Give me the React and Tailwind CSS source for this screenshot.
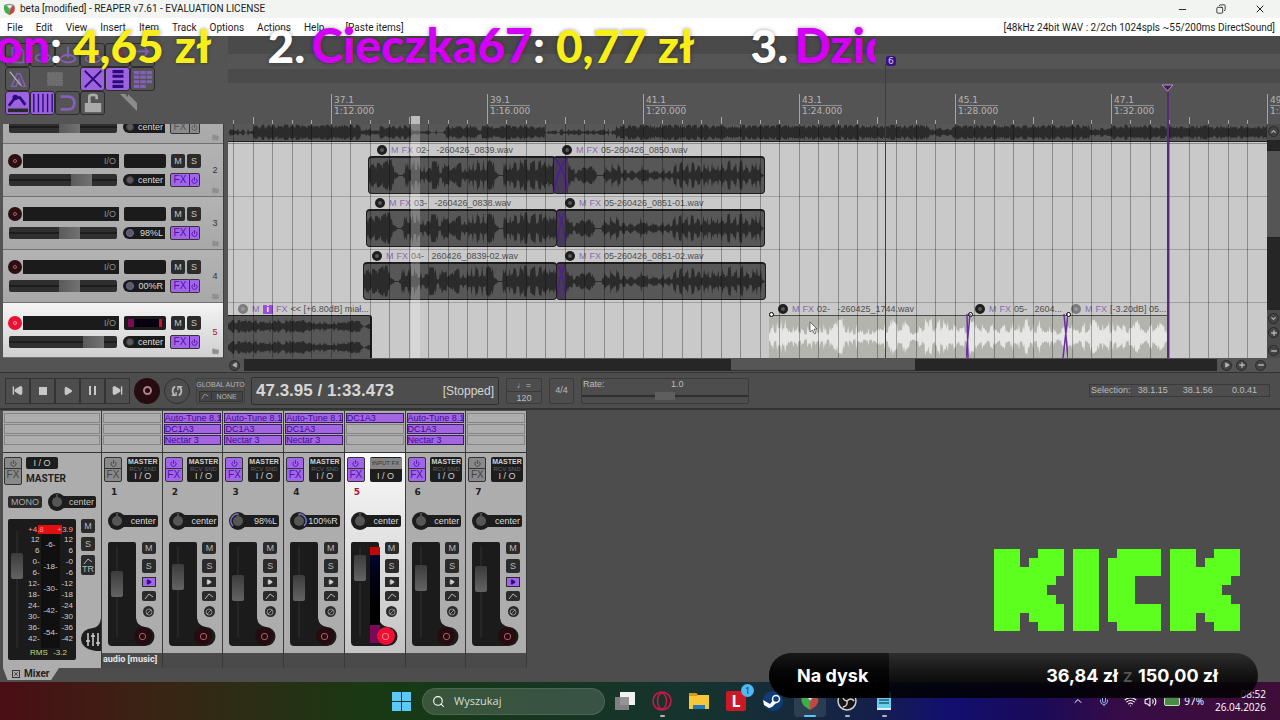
import { Play, Pause, SkipBack, SkipForward, Search, Wifi, Volume2, Mic, ChevronUp, Minus, Plus, X, Copy, Power, Folder } from 'lucide-react';

const STEP = 19.5;
const GRID_START = 5;
const gridLines = Array.from({ length: 110 }, (_, i) => Math.round(GRID_START + STEP * i));

const measures = [
  { bar: '37.1', time: '1:12.000', x: 103 },
  { bar: '39.1', time: '1:16.000', x: 259 },
  { bar: '41.1', time: '1:20.000', x: 415 },
  { bar: '43.1', time: '1:24.000', x: 571 },
  { bar: '45.1', time: '1:28.000', x: 727 },
  { bar: '47.1', time: '1:32.000', x: 883 },
  { bar: '49.1', time: '1:36.000', x: 1039 },
];

// amplitude strings, one digit per 2px
const VOX_A = '567577678999' + '521001' + '7737938' + '5252448887' + '1575634567724' + '2638397393898' + '82100' + '7737487397' + '9937893896857576';
const VOX_B = '86341' + '3345445542' + '000' + '2532743751' + '331232123' + '6334123221' + '241231' + '572783572873652' + '74627536' + '3743893572' + '8936427583710';
const VOX_SEL_A = '246274848432535243153624252641546788962524162331241323443625897633786521225439789347948673465344522';
const VOX_SEL_B = '8978643643256432456325734625895362584323524312456';
const VOX_SEL_C = '254643325723788763645727365465244678643235634676531';

const makeNoise = (length, segments, seed) => {
  let s = seed;
  let out = '';
  for (let i = 0; i < length; i++) {
    s = (s * 16807) % 2147483647;
    const seg = segments.find(([end]) => i <= end) || segments[segments.length - 1];
    out += Math.max(0, Math.min(9, Math.round(seg[1] - 2 + (s / 2147483647) * 4)));
  }
  return out;
};

const MUSIC = makeNoise(520, [[12, 2], [66, 8], [75, 3], [91, 7], [108, 1], [124, 7], [126, 3], [158, 7], [174, 2], [176, 5], [193, 2], [206, 7], [350, 8], [362, 4], [430, 8], [440, 4], [520, 7]], 91);
const STEREO = makeNoise(72, [[40, 5], [56, 4], [66, 5], [72, 2]], 17);

const tracks = [
  { id: 1, volume: 58, pan: 'center', fx: false },
  { id: 2, volume: 71, pan: 'center', fx: true },
  { id: 3, volume: 57, pan: '98%L', fx: true },
  { id: 4, volume: 57, pan: '00%R', fx: true },
  { id: 5, volume: 85, pan: 'center', fx: true, selected: true },
];

const lanes = [
  {
    id: 2,
    clips: [
      { x: 140, w: 188, pad: 9, name: '02-   -260426_0839.wav', wave: VOX_A },
      { x: 325, w: 212, pad: 9, fade: 14, name: '05-260426_0850.wav', wave: VOX_B },
    ],
  },
  {
    id: 3,
    clips: [
      { x: 138, w: 191, pad: 9, name: '03-   -260426_0838.wav', wave: VOX_A },
      { x: 328, w: 209, pad: 9, fade: 9, name: '05-260426_0851-01.wav', wave: VOX_B },
    ],
  },
  {
    id: 4,
    clips: [
      { x: 135, w: 194, pad: 9, name: '04-   260426_0839-02.wav', wave: VOX_A },
      { x: 328, w: 210, pad: 9, fade: 9, name: '05-260426_0851-02.wav', wave: VOX_B },
    ],
  },
];

const selectedClips = [
  { x: 541, w: 199, pad: 9, name: '02-   -260425_1744.wav', wave: VOX_SEL_A },
  { x: 740, w: 98, pad: 7, name: '05-   2604...', wave: VOX_SEL_B },
  { x: 838, w: 102, pad: 5, name: '[-3.20dB] 05...', wave: VOX_SEL_C, dim: true },
];

const channels = [
  { id: 1, pan: 'center', volume: 62, fx: [], name: 'audio [music]', mon: true },
  { id: 2, pan: 'center', volume: 73, fx: ['Auto-Tune 8.1', 'DC1A3', 'Nectar 3'] },
  { id: 3, pan: '98%L', volume: 56, fx: ['Auto-Tune 8.1', 'DC1A3', 'Nectar 3'] },
  { id: 4, pan: '100%R', volume: 56, fx: ['Auto-Tune 8.1', 'DC1A3', 'Nectar 3'] },
  { id: 5, pan: 'center', volume: 88, fx: ['DC1A3'], selected: true },
  { id: 6, pan: 'center', volume: 72, fx: ['Auto-Tune 8.1', 'DC1A3', 'Nectar 3'] },
  { id: 7, pan: 'center', volume: 70, fx: [], mon: true },
];

const KICK_ROWS = [
  '###..###.###..#####.###..###',
  '###.####.###.######.###.####',
  '########.###.######.########',
  '#######..###.###....#######.',
  '######...###.###....######..',
  '#######..###.###....#######.',
  '########.###.######.########',
  '###.####.###.######.###.####',
  '###..###.###..#####.###..###',
];

function Wave({ data, className }) {
  const n = data.length - 1;
  // a dip between samples keeps the peaks separate
  const points = [...data].flatMap((c, i) => {
    const next = Number(data[i + 1] ?? c);
    const amp = Number(c);
    return [[i, amp], [i + 0.5, Math.min(amp, next) * (i % 3 === 0 ? 0.6 : 0.95)]];
  });
  const top = points.map(([x, a]) => `${x},${10 - a - 0.3}`);
  const bottom = points.map(([x, a]) => `${x},${10 + a * 0.95 + 0.3}`).reverse();
  return (
    <svg className={className} viewBox={`0 0 ${n} 20`} preserveAspectRatio="none" aria-hidden="true">
      <polygon points={[...top, ...bottom].join(' ')} fill="currentColor" />
    </svg>
  );
}

function ReaperLogo({ className }) {
  return (
    <svg className={className} viewBox="0 0 20 20" aria-hidden="true">
      <path d="M2 3 Q9 -1 17 3 Q15 8 10 11 Q4 9 2 3Z" fill="#8b9a94" />
      <path d="M2 3 Q0 10 4 15 L10 19 Q12 13 9 8 Q5 4 2 3Z" fill="#3fae49" />
      <path d="M17 3 Q20 10 16 15 L10 19 Q9 12 12 8Z" fill="#c4473f" />
      <path d="M6 4 Q10 2 14 4 Q12 8 10 9 Q8 7 6 4Z" fill="#e9ecea" />
    </svg>
  );
}

function TitleBar() {
  return (
    <header className="font-['Roboto',sans-serif] text-[#1c1c1c]">
      <div className="flex h-[18px] items-center justify-between bg-[#f2f4f2] pl-[3px]">
        <div className="flex items-center gap-1">
          <ReaperLogo className="h-[13px] w-[13px]" />
          <h1 className="text-[10px] leading-none">beta [modified] - REAPER v7.61 - EVALUATION LICENSE</h1>
        </div>
        <div className="flex items-center gap-7 pr-[14px]">
          <button aria-label="Minimize"><Minus size={11} strokeWidth={2} /></button>
          <button aria-label="Restore"><Copy size={10} strokeWidth={2} className="-scale-x-100" /></button>
          <button aria-label="Close"><X size={12} strokeWidth={2} /></button>
        </div>
      </div>
      <nav className="flex h-[18px] items-center justify-between bg-white pl-[7px] pr-[5px] text-[10px]">
        <div className="flex gap-[13px]">
          {['File', 'Edit', 'View', 'Insert', 'Item', 'Track', 'Options', 'Actions', 'Help'].map((item) => (
            <button key={item}>{item}</button>
          ))}
          <span className="pl-2">[Paste items]</span>
        </div>
        <span>[48kHz 24bit WAV : 2/2ch 1024spls ~55/200ms DirectSound]</span>
      </nav>
    </header>
  );
}

function ToolButton({ label, active, plain, children }) {
  return (
    <button
      aria-label={label}
      className={`flex h-6 w-[25px] items-center justify-center rounded-[3px] border ${
        plain ? 'border-transparent' : 'border-[#2c2c2c]'
      } ${active ? 'bg-[#9d63dc] text-[#2b0a80]' : 'bg-[#545454] text-[#8560b8]'}`}
    >
      <svg viewBox="0 0 24 24" className="h-[22px] w-[22px]" fill="none" stroke="currentColor" strokeWidth="2" aria-hidden="true">
        {children}
      </svg>
    </button>
  );
}

function Toolbar() {
  return (
    <div className="flex h-[88px] flex-col pl-[5px] pt-[7px]">
      <div className="flex">
        <ToolButton label="New project"><path d="M6 4h8l4 4v12H6z" /></ToolButton>
        <ToolButton label="Open project"><ellipse cx="12" cy="15" rx="8" ry="4" /><path d="M12 3v10" /></ToolButton>
        <ToolButton label="Save project"><ellipse cx="12" cy="16" rx="8" ry="4" /><path d="M12 3v12" /></ToolButton>
        <ToolButton label="Project settings"><ellipse cx="12" cy="16" rx="8" ry="4" /></ToolButton>
        <ToolButton label="Undo"><circle cx="12" cy="12" r="6" stroke="#a02050" /></ToolButton>
        <ToolButton label="Redo"><path d="M5 8h12l-3-4m3 4l-6 10" /></ToolButton>
      </div>
      <div className="flex">
        <ToolButton label="Metronome">
          <path d="M5 20 11 6h3l6 14h-4l-3-8-3 8z" strokeWidth="1.500" />
          <path d="M3 4l12 15" stroke="#b0b0b0" strokeWidth="1.500" />
        </ToolButton>
        <div className="flex w-[50px] justify-center">
          <ToolButton label="Item grouping" plain>
            <rect x="4" y="5" width="16" height="14" fill="#6d6d6d" stroke="#8c8c8c" strokeWidth="1" strokeDasharray="1 2" />
          </ToolButton>
        </div>
        <ToolButton label="Auto crossfade" active><path d="M3 3l18 18M21 3L3 21" /></ToolButton>
        <ToolButton label="Ripple editing" active><path d="M6 4h12M6 9h12M6 15h12M6 20h12" strokeWidth="3.500" /></ToolButton>
        <ToolButton label="Grid lines"><path d="M2 5h20M2 10h20M2 15h20M2 20h14" strokeWidth="3.500" strokeDasharray="6 1" /></ToolButton>
      </div>
      <div className="flex">
        <ToolButton label="Envelopes" active>
          <path d="M2 15 9 6l5 0 6 8" strokeWidth="3" />
          <circle cx="9" cy="6" r="2" fill="currentColor" />
          <path d="M1 20h22" strokeWidth="4" stroke="#2a2a2a" />
        </ToolButton>
        <ToolButton label="Snap" active><path d="M2 2v20M7 2v20M12 2v20M17 2v20M22 2v20" strokeWidth="1.500" /></ToolButton>
        <ToolButton label="Loop"><path d="M4 5h8q7 0 7 7t-7 7H4" strokeWidth="3" /></ToolButton>
        <ToolButton label="Lock">
          <path d="M3 12h18v10H3z" fill="#aaa" stroke="none" />
          <path d="M8 12V5q0-2 4-2t4 2v3" stroke="#aaa" strokeWidth="3" />
        </ToolButton>
        <svg viewBox="0 0 24 24" className="ml-[15px] h-6 w-6 text-[#8c8c8c]" fill="currentColor" aria-hidden="true">
          <path d="M1 3l17 0v17zM1 3h2v2z" opacity="0" />
          <path d="M0 3h5l3 3V3l9 9v8L0 3z" />
        </svg>
      </div>
    </div>
  );
}

const smallButton = 'flex h-[14px] w-[14px] items-center justify-center rounded-[2px] bg-[#2b2b2b] text-[9px] leading-none text-[#c4c4c4]';

function TrackRow({ track }) {
  const { id, selected, fx, pan, volume } = track;
  return (
    <div
      className={`flex shrink-0 justify-between border-b border-[#707070] pl-[5px] ${
        selected ? 'h-[55px] bg-linear-to-b from-[#f4f4f4] to-[#d0d0d0] pt-[13px]' : 'h-[53px] bg-linear-to-b from-[#b3b3b3] to-[#a8a8a8] pt-[10px]'
      }`}
    >
      <div className="flex flex-col gap-[5px]">
        <div className="flex items-center">
          <button
            aria-label={`Record arm track ${id}`}
            className={`flex h-[14px] w-[14px] items-center justify-center rounded-full ${selected ? 'bg-[#ee1033]' : 'bg-[#2a1015]'}`}
          >
            <span className={`h-1 w-1 rounded-full border ${selected ? 'border-[#ffa0a8]' : 'border-[#b06068]'}`} />
          </button>
          <button className="ml-px h-[14px] w-24 bg-[#1b1b1b] pr-[3px] text-right text-[9px] leading-none text-[#8c8c8c]">I/O</button>
          <div className="ml-[5px] flex h-[14px] w-[42px] items-center justify-between rounded-[2px] bg-[#1b1b1b] px-1">
            {selected && (
              <>
                <span className="h-2 w-[6px] bg-[#7d0a55]" />
                <span className="h-2 flex-1 bg-[#06000f]" />
                <span className="h-2 w-[3px] bg-[#d01030]" />
              </>
            )}
          </div>
          <button className={`${smallButton} ml-[5px]`} aria-label={`Mute track ${id}`}>M</button>
          <button className={`${smallButton} ml-[2px]`} aria-label={`Solo track ${id}`}>S</button>
        </div>
        <div className="flex items-center pl-px">
          <input
            type="range"
            aria-label={`Volume track ${id}`}
            defaultValue={volume}
            className="m-0 h-3 w-[108px] appearance-none rounded-[2px] bg-[#2f2f2f] bg-linear-to-b from-transparent from-40% via-[#0f0f0f] via-50% to-transparent to-60% [&::-webkit-slider-thumb]:h-3 [&::-webkit-slider-thumb]:w-[21px] [&::-webkit-slider-thumb]:appearance-none [&::-webkit-slider-thumb]:bg-linear-to-r [&::-webkit-slider-thumb]:from-[#5a5a5a] [&::-webkit-slider-thumb]:to-[#727272]"
          />
          <button className="ml-[6px] flex h-3 w-[42px] items-center justify-between rounded-l-full rounded-r-[2px] bg-[#1b1b1b] pl-[3px] pr-[2px] text-[9px] leading-none text-[#dcdcdc]">
            <span className={`h-2 w-2 rounded-full border ${pan === 'center' ? 'border-[#3a3a3a]' : 'border-[#6a62b0]'} bg-[#5c5c5c]`} />
            {pan}
          </button>
          <button
            aria-label={`FX chain track ${id}`}
            className={`ml-[5px] flex h-[14px] w-5 items-center justify-center rounded-l-[2px] border border-[#333] text-[10px] leading-none ${fx ? 'bg-[#a365e8] text-[#4a14a8]' : 'bg-[#8b8b8b] text-[#555]'}`}
          >
            FX
          </button>
          <button
            aria-label={`Bypass FX track ${id}`}
            className={`flex h-[14px] w-[10px] items-center justify-center rounded-r-[2px] border border-l-0 border-[#333] ${fx ? 'bg-[#a365e8] text-[#4a14a8]' : 'bg-[#8b8b8b] text-[#555]'}`}
          >
            <Power size={7} strokeWidth={3} />
          </button>
        </div>
      </div>
      <div className={`flex w-4 flex-col items-center justify-between pt-3 text-[9px] leading-none ${selected ? 'text-[#b01030]' : 'text-[#333]'}`}>
        {id}
        <Folder size={7} fill="#8f8f8f" className="mb-[2px] text-[#8f8f8f]" />
      </div>
    </div>
  );
}

function TrackPanel() {
  return (
    <div className="mr-1 flex flex-col border-r border-[#3c3c3c] pl-[3px]">
      <div className="flex h-5 flex-col justify-end overflow-hidden">
        <TrackRow track={tracks[0]} />
      </div>
      {tracks.slice(1).map((track) => (
        <TrackRow key={track.id} track={track} />
      ))}
    </div>
  );
}

function Ruler() {
  return (
    <div className="relative h-[88px] overflow-hidden bg-[#545454]">
      <div className="h-[18px] bg-[#4a4a4a]" />
      <div className="h-[15px] bg-[#555]" />
      <div className="h-[14px] bg-[#4b4b4b]" />
      <svg className="absolute inset-0 h-full w-full" shapeRendering="crispEdges" aria-hidden="true">
        {gridLines.map((x, i) => (
          <line key={x} x1={x} x2={x} y1={(i + 3) % 8 === 0 ? 58 : (i + 3) % 4 === 0 ? 81 : 84} y2="88" stroke="#a5a5a5" />
        ))}
      </svg>
      {measures.map((m) => (
        <div key={m.bar} className="absolute top-[59px] font-['DejaVu_Sans',sans-serif] text-[9px] leading-[10px] text-[#b4b4b4]" style={{ left: m.x + 3 }}>
          <div className="border-b border-[#909090]">{m.bar}</div>
          <div>{m.time}</div>
        </div>
      ))}
    </div>
  );
}

function ClipLabel({ clip, badge }) {
  return (
    <div className="flex h-3 items-center gap-[3px] whitespace-pre text-[9px] leading-none text-[#4f4f4f]" style={{ paddingLeft: clip.pad }}>
      <span className={`mr-px h-[10px] w-[10px] shrink-0 rounded-full border-[3px] ${clip.dim ? 'border-[#7c7c7c] bg-[#999]' : 'border-[#1f1f1f] bg-[#5a5a5a]'}`} />
      <span className="text-[#8a6cb0]">M</span>
      {badge && <span className="bg-[#9450dc] px-1 font-bold text-white">i</span>}
      <span className="text-[#8a6cb0]">FX</span>
      <span>{clip.name}</span>
    </div>
  );
}

function Clip({ clip }) {
  return (
    <div className="absolute inset-y-0 flex flex-col pb-[2px]" style={{ left: clip.x, width: clip.w }}>
      <ClipLabel clip={clip} />
      <div className="flex flex-1 overflow-hidden rounded-[4px] border border-t-2 border-[#1d1d1d] bg-[#575757]">
        {clip.fade && (
          <svg className="h-full shrink-0 bg-[#463a58]" style={{ width: clip.fade }} viewBox="0 0 10 36" preserveAspectRatio="none" fill="none" stroke="#4c1a96" aria-hidden="true">
            <path d="M0 0 Q7 8 10 36M10 0 Q3 8 0 36" />
          </svg>
        )}
        <Wave data={clip.wave} className="h-full min-w-0 flex-1 text-[#2b2b2b]" />
      </div>
    </div>
  );
}

function SelectedClip({ clip }) {
  return (
    <div className="absolute inset-y-0 flex flex-col" style={{ left: clip.x, width: clip.w }}>
      <ClipLabel clip={clip} />
      <div className="relative flex flex-1 border-t border-[#4d4d4d] bg-[#b4b4af]">
        <Wave data={clip.wave} className="h-full w-full text-[#e6e6e4]" />
        <span className="absolute -top-1 left-0 h-[5px] w-[5px] rounded-full border border-black bg-white" />
      </div>
    </div>
  );
}

function Arrange() {
  return (
    <div className="relative min-w-0 flex-1 overflow-hidden bg-[#c9c9c9]">
      <div className="h-5 border-b border-[#8c8c8c]">
        <div className="h-[18px] w-[1039px] border-b border-[#222] bg-[#575757]">
          <Wave data={MUSIC} className="h-full w-full text-[#2b2b2b]" />
        </div>
      </div>
      {lanes.map((lane) => (
        <div key={lane.id} className="relative h-[53px] border-b border-[#a0a0a0]">
          {lane.clips.map((clip) => (
            <Clip key={clip.name} clip={clip} />
          ))}
        </div>
      ))}
      <div className="relative h-[55px]">
        <div className="flex h-full w-36 flex-col">
          <ClipLabel clip={{ pad: 10, dim: true, name: '<< [+6.80dB] miał...' }} badge />
          <div className="flex flex-1 flex-col rounded-tr-[3px] border-r-2 border-t border-[#1d1d1d] bg-[#575757]">
            <Wave data={STEREO} className="h-[21px] w-full text-[#2b2b2b]" />
            <Wave data={STEREO} className="h-[21px] w-full text-[#2b2b2b]" />
          </div>
        </div>
        {selectedClips.map((clip) => (
          <SelectedClip key={clip.name} clip={clip} />
        ))}
        <svg className="absolute bottom-0 left-[738px] h-[44px] w-[102px]" viewBox="0 0 102 44" fill="none" stroke="#6a2ea0" strokeWidth="1.500" aria-hidden="true">
          <path d="M1 0 2 44M4 0 0 44M98 0l4 44M102 0l-5 44" />
        </svg>
      </div>
      {/* grid runs over the items */}
      <svg className="pointer-events-none absolute inset-0 h-full w-full" shapeRendering="crispEdges" aria-hidden="true">
        {gridLines.map((x) => (
          <line key={x} x1={x} x2={x} y1="0" y2="100%" stroke="#000" strokeOpacity="0.300" />
        ))}
      </svg>
    </div>
  );
}

function RoundButton({ label, children }) {
  return (
    <button aria-label={label} className="flex h-[11px] w-[11px] shrink-0 items-center justify-center rounded-full border border-[#2a2a2a] bg-[#444] text-[#b4b4b4]">
      {children}
    </button>
  );
}

function Timeline() {
  return (
    <div className="relative flex min-w-0 flex-1 flex-col">
      <Ruler />
      <div className="flex">
        <Arrange />
        <div className="flex w-[13px] flex-col items-center gap-[3px] bg-[#4a4a4a] pb-[2px] pt-[2px]">
          <RoundButton label="Scroll up"><ChevronUp size={7} strokeWidth={4} /></RoundButton>
          <div className="w-full flex-1 bg-[#262626] pt-[10px]">
            <div className="h-[88px] border-y border-[#222] bg-[#555]" />
          </div>
          <RoundButton label="Scroll down"><ChevronUp size={7} strokeWidth={4} className="rotate-180" /></RoundButton>
          <RoundButton label="Zoom in vertically"><Plus size={8} strokeWidth={4} /></RoundButton>
          <span className="h-px" />
          <RoundButton label="Zoom out vertically"><Minus size={8} strokeWidth={4} /></RoundButton>
        </div>
      </div>
      <div className="absolute bottom-0 left-[183px] top-20 w-[9px] bg-white/25" />
      <span className="absolute left-[183px] top-20 h-2 w-[9px] bg-[#bdbdbd]" />
      <div className="absolute bottom-0 left-[657px] top-7 w-px bg-[#5a1f95]" />
      <span className="absolute left-[658px] top-5 rounded-[3px] bg-[#3a0f86] px-[2px] font-['DejaVu_Sans',sans-serif] text-[9px] leading-[10px] text-[#d8c8f0]">6</span>
      <div className="absolute bottom-0 left-[939px] top-14 w-[2px] bg-[#5c2a75]" />
      <svg className="absolute left-[933px] top-12 h-2 w-[13px]" viewBox="0 0 13 8" aria-hidden="true">
        <path d="M1 1h11L6.500 7z" fill="#4a1560" stroke="#b0a0b8" />
      </svg>
      <svg className="absolute left-[581px] top-[285px] h-[14px] w-[9px]" viewBox="0 0 9 14" aria-hidden="true">
        <path d="M1 1v10l2.500-2 2 4 1.500-1-2-4h3z" fill="#fff" stroke="#444" strokeWidth="0.700" />
      </svg>
    </div>
  );
}

function HorizontalScroll() {
  return (
    <div className="flex h-[15px] items-center gap-1 border-b border-[#333] bg-[#545454] pl-[229px] pr-[14px]">
      <RoundButton label="Scroll left"><Play size={6} fill="currentColor" className="rotate-180" /></RoundButton>
      <div className="h-3 flex-1 bg-[#262626]">
        <div className="ml-[50%] h-full w-[19%] border-b border-[#2f2f2f] bg-[#565656]" />
      </div>
      <RoundButton label="Scroll right"><Play size={6} fill="currentColor" /></RoundButton>
      <RoundButton label="Zoom in"><Plus size={8} strokeWidth={4} /></RoundButton>
      <span className="w-0" />
      <RoundButton label="Zoom out"><Minus size={8} strokeWidth={4} /></RoundButton>
    </div>
  );
}

const transportButton = 'flex h-[26px] w-[25px] items-center justify-center border border-[#333] text-[#c8c8c8]';

function Transport() {
  return (
    <section className="flex h-[37px] items-center border-b-2 border-[#333] bg-[#4d4d4d] pl-[5px] pr-[10px]" aria-label="Transport">
      <button className={transportButton} aria-label="Go to start"><SkipBack size={11} fill="currentColor" strokeWidth={3} /></button>
      <button className={transportButton} aria-label="Stop"><span className="h-2 w-2 bg-current" /></button>
      <button className={transportButton} aria-label="Play"><Play size={10} fill="currentColor" /></button>
      <button className={transportButton} aria-label="Pause">
        <span className="h-[9px] w-[7px] border-x-2 border-current" />
      </button>
      <button className={transportButton} aria-label="Go to end"><SkipForward size={11} fill="currentColor" strokeWidth={3} /></button>
      <button className="ml-1 flex h-[26px] w-[26px] items-center justify-center rounded-full bg-[#260c10]" aria-label="Record">
        <span className="h-[9px] w-[9px] rounded-full border-2 border-[#b08088]" />
      </button>
      <button className="ml-1 flex h-[26px] w-[26px] items-center justify-center rounded-full border border-[#303030] text-[#b8b8b8]" aria-label="Repeat">
        <svg viewBox="0 0 16 16" className="h-[14px] w-[14px]" fill="none" stroke="currentColor" strokeWidth="2" aria-hidden="true">
          <path d="M6 3Q3 4 3 8t3 5M10 13q3-1 3-5t-3-5" />
          <path d="M2 13h5V9M14 3H9v4" strokeWidth="1.500" />
        </svg>
      </button>
      <div className="ml-[6px] flex h-[26px] w-[49px] flex-col items-center justify-between rounded-[2px] border border-[#404040] py-px text-[7px] leading-[9px] text-[#b4b4b4]">
        <span className="whitespace-nowrap">GLOBAL AUTO</span>
        <button className="flex h-[11px] w-11 items-center border border-[#333] bg-[#444]">
          <svg viewBox="0 0 12 8" className="h-2 w-3 border-r border-[#333]" fill="none" stroke="#999" aria-hidden="true"><path d="M2 7l3-5 4 2" /></svg>
          <span className="flex-1">NONE</span>
        </button>
      </div>
      <div className="ml-[6px] flex h-7 w-[248px] items-center justify-between rounded-[2px] border border-[#2f2f2f] px-1 text-[#d6d6d6]">
        <span className="text-[17px] font-bold leading-none">47.3.95 / 1:33.473</span>
        <span className="text-xs leading-none">[Stopped]</span>
      </div>
      <div className="ml-[7px] flex h-[26px] w-9 flex-col rounded-[2px] border border-[#3a3a3a] text-center text-[9px] leading-3 text-[#bcbcbc]">
        <span className="border-b border-[#3a3a3a]">♩=</span>
        <span>120</span>
      </div>
      <button className="ml-[7px] h-[26px] w-[25px] rounded-[2px] border border-[#3a3a3a] text-[9px] leading-none text-[#bcbcbc]">4/4</button>
      <div className="ml-[7px] flex h-[26px] w-[168px] flex-col rounded-[2px] border border-[#3a3a3a] text-[9px] leading-[10px] text-[#bcbcbc]">
        <div className="flex pl-px">
          <label htmlFor="rate" className="w-[88px]">Rate:</label>
          <span>1.0</span>
        </div>
        <input
          id="rate"
          type="range"
          className="m-0 mt-[3px] h-2 w-full appearance-none bg-linear-to-b from-transparent from-30% via-[#222] via-50% to-transparent to-70% [&::-webkit-slider-thumb]:h-2 [&::-webkit-slider-thumb]:w-5 [&::-webkit-slider-thumb]:appearance-none [&::-webkit-slider-thumb]:bg-[#5e5e5e]"
        />
      </div>
      <div className="ml-auto flex h-[13px] w-[181px] items-center justify-between border border-[#3a3a3a] pl-px pr-3 text-[9px] leading-none text-[#bcbcbc]">
        <span>Selection:</span>
        <span>38.1.15</span>
        <span className="pl-2">38.1.56</span>
        <span className="pl-3">0.0.41</span>
      </div>
    </section>
  );
}

function FxSlots({ fx }) {
  return (
    <div className="flex flex-col gap-px border-b border-[#333] bg-[#adadad] px-px pb-[7px] pt-[2px]">
      {[0, 1, 2].map((i) => (
        <button
          key={i}
          aria-label={fx[i] || 'Empty FX slot'}
          className={`h-[10px] whitespace-nowrap border text-left text-[9px] leading-none ${
            fx[i] ? 'border-[#3a2060] bg-[#a365e0] text-[#3c0c98]' : 'border-[#858585] bg-[#adadad]'
          }`}
        >
          {fx[i]}
        </button>
      ))}
    </div>
  );
}

function FxPower({ on, name }) {
  return (
    <div className={`flex w-[18px] flex-col overflow-hidden rounded-[2px] border border-[#333] ${on ? 'bg-[#a365e8] text-[#4a14a8]' : 'bg-[#898989] text-[#444]'}`}>
      <button aria-label={`Bypass FX ${name}`} className="flex h-[11px] items-center justify-center border-b border-[#333]"><Power size={7} strokeWidth={3} /></button>
      <button aria-label={`FX chain ${name}`} className="h-3 text-[10px] leading-none">FX</button>
    </div>
  );
}

function Knob({ pan }) {
  return (
    <svg viewBox="0 0 18 18" className="z-10 h-[18px] w-[18px] shrink-0" fill="none" aria-hidden="true">
      <circle cx="9" cy="9" r="9" fill="#1d1d1d" />
      <circle cx="9" cy="9" r="5" fill="#565656" />
      <path d="M9 1v3" stroke="#777" />
      {pan === '98%L' && <path d="M9 2a7 7 0 0 0-5 12" stroke="#7a6cd0" strokeWidth="1.500" />}
      {pan === '100%R' && <path d="M9 2a7 7 0 0 1 5 12" stroke="#7a6cd0" strokeWidth="1.500" />}
    </svg>
  );
}

const stripButton = 'flex w-[14px] items-center justify-center rounded-[2px] bg-[#2b2b2b] text-[9px] leading-none text-[#b8b8b8]';

const verticalFader = 'm-0 w-3 appearance-none bg-linear-to-r from-transparent from-45% via-[#5c5c5c] via-50% to-transparent to-55% [writing-mode:vertical-lr] [direction:rtl] [&::-webkit-slider-thumb]:h-[26px] [&::-webkit-slider-thumb]:w-3 [&::-webkit-slider-thumb]:appearance-none [&::-webkit-slider-thumb]:rounded-[2px] [&::-webkit-slider-thumb]:bg-linear-to-b [&::-webkit-slider-thumb]:from-[#3c3c3c] [&::-webkit-slider-thumb]:to-[#646464]';

function ChannelStrip({ channel }) {
  const { id, pan, volume, fx, selected, name, mon } = channel;
  const fxOn = fx.length > 0;
  return (
    <div className="flex flex-col border-r border-[#3a3a3a]">
      <FxSlots fx={fx} />
      <div className={`flex flex-col pb-[7px] pl-[2px] pr-[3px] pt-1 ${selected ? 'bg-linear-to-b from-[#fafafa] to-[#c4c4c4]' : 'bg-[#adadad]'}`}>
        <div className="flex h-[25px] justify-between">
          <FxPower on={fxOn} name={`channel ${id}`} />
          <button className="flex w-8 flex-col items-center justify-between overflow-hidden rounded-[2px] bg-[#1d1d1d] py-px text-[7px] leading-[8px] text-[#cfcfcf]">
            {selected ? (
              <span className="w-full whitespace-nowrap bg-[#848484] text-[6px] leading-[11px] text-[#333]">INPUT FX</span>
            ) : (
              <>
                <span className="font-bold">MASTER</span>
                <span className="whitespace-nowrap text-[6px] leading-[6px] text-[#666]">RCV SND</span>
              </>
            )}
            <span className="text-[9px] leading-[9px]">I / O</span>
          </button>
        </div>
        <span className={`pl-[7px] pt-1 font-['DejaVu_Sans',sans-serif] text-[9px] font-bold leading-3 ${selected ? 'text-[#b01030]' : 'text-[#222]'}`}>{id}</span>
        <div className="mt-[14px] flex items-center pl-1 pr-px">
          <Knob pan={pan} />
          <span className="-ml-2 h-3 flex-1 rounded-[2px] bg-[#1d1d1d] pr-[2px] text-right text-[9px] leading-3 text-[#dcdcdc]">{pan}</span>
        </div>
        <div className="relative mt-3 flex h-[104px] justify-between pl-1 pr-px">
          <svg viewBox="0 0 48 104" className="absolute left-1 top-0 h-[104px] w-12" aria-hidden="true">
            <path d="M2 0h24q2 0 2 2v74q1 8 9 9a9.500 9.500 0 0 1 0 19H4q-4 0-4-4V2q0-2 2-2z" fill="#1b1b1b" />
          </svg>
          <div className="relative flex items-start gap-1 pl-[3px] pt-[5px]">
            <input type="range" aria-label={`Volume channel ${id}`} defaultValue={volume} className={`${verticalFader} h-[90px]`} />
            {selected && (
              <div className="flex h-24 w-[10px] flex-col">
                <span className="h-2 bg-[#c00808]" />
                <span className="flex-1 bg-linear-to-b from-[#05052c] to-black" />
                <span className="h-[18px] bg-[#7a0a58]" />
              </div>
            )}
          </div>
          <div className="relative flex w-[18px] flex-col items-center">
            <button className={`${stripButton} h-3`} aria-label={`Mute channel ${id}`}>M</button>
            <button className={`${stripButton} mt-[5px] h-[14px]`} aria-label={`Solo channel ${id}`}>S</button>
            <button
              aria-label={`Monitor channel ${id}`}
              className={`mt-1 flex h-[10px] w-[14px] items-center justify-center border border-[#2b2b2b] ${mon ? 'bg-[#a365e8] text-[#2b0a80]' : 'bg-[#2b2b2b] text-[#d0d0d0]'}`}
            >
              <Play size={6} fill="currentColor" strokeWidth={3} />
            </button>
            <button className={`${stripButton} mt-1 h-[10px]`} aria-label={`Envelopes channel ${id}`}>
              <svg viewBox="0 0 12 8" className="h-2 w-3" fill="none" stroke="currentColor" aria-hidden="true"><path d="M2 7l4-5 4 3" /></svg>
            </button>
            <button className="mt-[5px] flex h-[11px] w-[11px] items-center justify-center rounded-full bg-[#2b2b2b]" aria-label={`Phase channel ${id}`}>
              <svg viewBox="0 0 8 8" className="h-2 w-2" fill="none" stroke="#8a8a8a" aria-hidden="true"><circle cx="4" cy="4" r="3" /><path d="M2 6l4-4" /></svg>
            </button>
            <button
              aria-label={`Record arm channel ${id}`}
              className={`mr-3 mt-[10px] flex h-[18px] w-[18px] shrink-0 items-center justify-center rounded-full ${selected ? 'bg-[#ee1033]' : 'bg-[#260c10]'}`}
            >
              <span className={`h-[7px] w-[7px] rounded-[3px] border ${selected ? 'border-[#ff8090]' : 'border-[#a86068]'}`} />
            </button>
          </div>
        </div>
      </div>
      <div className="h-[15px] whitespace-nowrap bg-[#4a4a4a] pl-px pt-px font-['Roboto',sans-serif] text-[9px] font-bold leading-[11px] text-[#e6e6e6]">{name}</div>
    </div>
  );
}

function MasterStrip() {
  return (
    <div className="flex w-[99px] flex-col border-r border-[#3a3a3a] bg-[#adadad]">
      <FxSlots fx={[]} />
      <div className="flex flex-col px-px pt-1">
        <div className="flex gap-1">
          <FxPower name="master" />
          <div className="flex flex-col">
            <button className="h-3 w-8 rounded-[2px] bg-[#1d1d1d] text-[9px] leading-none text-[#cfcfcf]">I / O</button>
            <span className="pt-1 font-['Roboto',sans-serif] text-[10px] font-bold leading-3 text-[#222]">MASTER</span>
          </div>
        </div>
        <div className="mt-2 flex items-center px-1">
          <button className="h-3 w-[34px] rounded-[2px] bg-[#2b2b2b] text-[9px] leading-none text-[#a8a8a8]">MONO</button>
          <span className="w-[6px]" />
          <Knob pan="center" />
          <span className="-ml-2 h-3 flex-1 rounded-[2px] bg-[#1d1d1d] pr-[2px] text-right text-[9px] leading-3 text-[#c8c8c8]">center</span>
        </div>
      </div>
      <div className="mt-2 flex justify-between">
        <div className="ml-[5px] flex h-[141px] w-[68px] flex-col rounded-[2px] bg-[#1b1b1b] pb-[3px] pt-[6px] text-[8px]">
          <div className="flex min-h-0 flex-1">
            <input type="range" aria-label="Master volume" defaultValue={76} className={`${verticalFader} ml-[3px] mt-[6px] h-[117px]`} />
            <div className="flex flex-1 flex-col pl-[5px] pr-[3px]">
              <div className="flex justify-between bg-[linear-gradient(to_right,transparent_22%,#e01010_22%,#e01010_76%,transparent_76%)] leading-[9px] text-[#ff9a9a]">
                <span>+4.8</span>
                <span>+3.9</span>
              </div>
              <div className="flex flex-1 justify-between text-[#d0d0d0]">
                <div className="flex flex-col text-right leading-[11px]">
                  {['12', '6', '0-', '6-', '12-', '18-', '24-', '30-', '36-', '42-'].map((v) => <span key={v}>{v}</span>)}
                </div>
                <div className="flex flex-col bg-[#101010] px-[2px] text-center leading-[22px]">
                  {['-6-', '-18-', '-30-', '-42-', '-54-'].map((v) => <span key={v}>{v}</span>)}
                </div>
                <div className="flex flex-col text-right leading-[11px]">
                  {['12', '6', '-0', '-6', '-12', '-18', '-24', '-30', '-36', '-42'].map((v) => <span key={v}>{v}</span>)}
                </div>
              </div>
            </div>
          </div>
          <div className="flex justify-between pl-[22px] pr-[9px] leading-[9px] text-[#c8d878]">
            <span>RMS</span>
            <span>-3.2</span>
          </div>
        </div>
        <div className="flex w-5 flex-col">
          <button className={`${stripButton} h-[14px]`} aria-label="Mute master">M</button>
          <button className={`${stripButton} mt-1 h-[14px]`} aria-label="Solo master">S</button>
          <button className={`${stripButton} mt-1 h-5 flex-col text-[8px] text-[#777]`} aria-label="Trim envelopes">
            <svg viewBox="0 0 12 8" className="h-2 w-3" fill="none" stroke="#b8b8b8" aria-hidden="true"><path d="M2 7l4-5 4 3" /></svg>
            TR
          </button>
          <svg viewBox="0 0 20 34" className="mb-2 mt-auto h-[34px] w-5" aria-hidden="true">
            <path d="M20 0v33h-5Q0 31 0 20 1 11 12 10q7-1 8-10z" fill="#1d1d1d" />
            <path d="M7 15v13M12 15v13M17 15v13M5 23h4M10 18h4M15 25h4" stroke="#cfcfcf" strokeWidth="1.500" />
          </svg>
        </div>
      </div>
      <div className="h-[7px]" />
    </div>
  );
}

function KickLogo() {
  return (
    <svg role="img" aria-label="Kick" className="h-[82px] w-[246px]" viewBox="0 0 28 9" preserveAspectRatio="none" shapeRendering="crispEdges" fill="#5dff1e">
      {KICK_ROWS.flatMap((row, y) =>
        [...row].map((c, x) => c === '#' && <rect key={`${x}-${y}`} x={x} y={y} width="1" height="1" />)
      )}
    </svg>
  );
}

function Mixer() {
  return (
    <section className="flex flex-1 flex-col bg-[#4d4d4d] pl-[3px] pt-px" aria-label="Mixer">
      <div className="flex">
        <MasterStrip />
        <div className="grid w-[425px] grid-cols-7">
          {channels.map((channel) => (
            <ChannelStrip key={channel.id} channel={channel} />
          ))}
        </div>
      </div>
      <button className="flex h-3 w-14 items-center gap-1 bg-[#adadad] pl-[9px] font-['Roboto',sans-serif] text-[10px] font-bold leading-none text-[#222] [clip-path:polygon(0_0,100%_0,86%_100%,8%_100%)]">
        <span className="flex h-2 w-2 items-center justify-center border border-[#333]"><X size={6} strokeWidth={3} /></span>
        Mixer
      </button>
    </section>
  );
}

function TaskbarIcon({ label, running, active, children }) {
  return (
    <button aria-label={label} className={`relative flex h-8 w-8 items-center justify-center rounded-[4px] ${active ? 'bg-white/10' : ''}`}>
      {children}
      {running && <span className={`absolute bottom-0 h-[2px] rounded-full ${active ? 'w-3 bg-[#5cc8f0]' : 'w-[5px] bg-[#b0b4c0]'}`} />}
    </button>
  );
}

function Taskbar() {
  return (
    <footer className="flex h-[38px] shrink-0 items-center bg-[linear-gradient(to_right,#4a0e14,#3a2414_12%,#173a14_30%,#163230_56%,#15204a_68%,#120f70_74%,#1a0a58_81%,#380c46_88%,#3e0d38)] font-['Open_Sans',sans-serif] text-white">
      <div className="flex flex-1 items-center pl-[385px]">
        <TaskbarIcon label="Start">
          <svg viewBox="0 0 20 20" className="h-[19px] w-[19px]" fill="#5cc8f8" aria-hidden="true">
            <path d="M0 0h9.500v9.500H0zM10.500 0H20v9.500h-9.500zM0 10.500h9.500V20H0zM10.500 10.500H20V20h-9.500z" />
          </svg>
        </TaskbarIcon>
        <label className="ml-[5px] flex h-[27px] w-[183px] items-center gap-[9px] rounded-full border border-white/10 bg-white/15 pl-[9px]">
          <Search size={13} />
          <input type="search" aria-label="Wyszukaj" placeholder="Wyszukaj" className="w-32 bg-transparent text-[11px] text-white placeholder:text-[#d8ddd6] focus:outline-none" />
        </label>
        <div className="ml-1 flex gap-[5px]">
          <TaskbarIcon label="Task view">
            <svg viewBox="0 0 20 20" className="h-5 w-5" aria-hidden="true">
              <path d="M5 1h15v13H5z" fill="#f0f0f0" />
              <path d="M0 6h14v13H0z" fill="#8a8a8a" opacity="0.900" />
            </svg>
          </TaskbarIcon>
          <TaskbarIcon label="Opera" running>
            <svg viewBox="0 0 20 20" className="h-5 w-5" fill="none" stroke="#d01848" strokeWidth="1.500" aria-hidden="true">
              <circle cx="10" cy="10" r="9" />
              <ellipse cx="10" cy="10" rx="4.500" ry="8" />
            </svg>
          </TaskbarIcon>
          <TaskbarIcon label="File Explorer">
            <svg viewBox="0 0 20 20" className="h-5 w-5" aria-hidden="true">
              <path d="M0 2h7l2 2h11v14H0z" fill="#f6c838" />
              <path d="M0 2h7l2 3H0z" fill="#d89a18" />
              <path d="M4 14h12v4H4z" fill="#2478c0" />
            </svg>
          </TaskbarIcon>
          <TaskbarIcon label="Legimi">
            <span className="flex h-5 w-5 items-center justify-center rounded-[2px] bg-[#cc1824] text-base font-bold">L</span>
            <span className="absolute -top-px right-[-2px] flex h-[13px] w-[13px] items-center justify-center rounded-full bg-[#50b8f0] text-[9px] text-[#0c2838]">1</span>
          </TaskbarIcon>
          <TaskbarIcon label="Steam">
            <svg viewBox="0 0 20 20" className="h-5 w-5" aria-hidden="true">
              <circle cx="10" cy="10" r="10" fill="#123c78" />
              <path d="M0 9l7 4 4-5 3 3-5 5-3 1-5-3z" fill="#fff" />
              <circle cx="13" cy="8" r="3.500" fill="#123c78" stroke="#fff" strokeWidth="1.500" />
            </svg>
          </TaskbarIcon>
          <TaskbarIcon label="REAPER" running active><ReaperLogo className="h-5 w-5" /></TaskbarIcon>
          <TaskbarIcon label="OBS Studio" running>
            <svg viewBox="0 0 20 20" className="h-5 w-5" fill="none" stroke="#d0d0d0" strokeWidth="1.500" aria-hidden="true">
              <circle cx="10" cy="10" r="9" fill="#161616" />
              <path d="M10 10q-5-1-4-6M10 10q4-4 7 0M10 10q1 5-4 6" />
            </svg>
          </TaskbarIcon>
          <TaskbarIcon label="Notepad" running>
            <svg viewBox="0 0 20 20" className="h-5 w-5" aria-hidden="true">
              <path d="M3 1h14v17H3z" fill="#68d0e8" />
              <path d="M5 6h10M5 9h10M5 12h10" stroke="#185c80" strokeWidth="1.500" />
              <path d="M3 17h14v2H3z" fill="#e0f0f0" />
            </svg>
          </TaskbarIcon>
        </div>
      </div>
      <div className="flex items-center gap-[7px] pr-[14px] text-[10px]">
        <ChevronUp size={12} />
        <Mic size={12} className="mx-[7px] text-[#90b0e0]" />
        <Wifi size={13} />
        <Volume2 size={13} />
        <span className="flex items-center gap-1">
          <span className="h-[9px] w-4 rounded-[2px] border border-[#c0e8b0] bg-[#4a8a48]" />
          97%
        </span>
        <div className="ml-1 text-right leading-[13px]">
          <div>08:52</div>
          <div>26.04.2026</div>
        </div>
      </div>
    </footer>
  );
}

// stream overlays sit on top of the desktop
function DonationTicker() {
  return (
    <div className="absolute left-0 top-[19px] w-[875px] overflow-hidden whitespace-nowrap font-['Lato',sans-serif] text-[46px] font-black leading-[54px] text-white [text-shadow:0_0_4px_rgba(0,0,0,0.4)]">
      <div className="-ml-[5px] flex gap-14">
        <span><span className="text-5xl text-[#d400f5]">on</span>: <span className="text-[#f8ee18]">4,65 zł</span></span>
        <span>2.<span className="ml-[6px] text-5xl text-[#d400f5]">Cieczka67</span>: <span className="text-[#f8ee18]">0,77 zł</span></span>
        <span>3.<span className="ml-[6px] text-5xl text-[#d400f5]">Dzid</span></span>
      </div>
    </div>
  );
}

function DonationGoal() {
  return (
    <div className="absolute bottom-[22px] right-[22px] flex h-[45px] w-[489px] overflow-hidden rounded-full bg-linear-to-b from-[#2c2c2c]/95 to-black/85 font-['Inter',sans-serif] text-lg font-bold text-white">
      <div className="flex w-[120px] items-center bg-linear-to-b from-[#181818] to-black pl-7">Na dysk</div>
      <div className="flex flex-1 items-center justify-end gap-1 pr-10">
        36,84 zł <span className="px-px font-medium text-[#555]">z</span> 150,00 zł
      </div>
    </div>
  );
}

export default function App() {
  return (
    <div className="relative flex min-h-screen flex-col overflow-hidden bg-[#4d4d4d] font-['Liberation_Sans',sans-serif]">
      <TitleBar />
      <main className="flex flex-1 flex-col">
        <div className="flex bg-[#545454]">
          <div className="w-[228px] shrink-0">
            <Toolbar />
            <TrackPanel />
          </div>
          <Timeline />
        </div>
        <HorizontalScroll />
        <Transport />
        <Mixer />
      </main>
      <Taskbar />
      <div className="absolute bottom-[89px] right-10">
        <KickLogo />
      </div>
      <DonationTicker />
      <DonationGoal />
    </div>
  );
}
